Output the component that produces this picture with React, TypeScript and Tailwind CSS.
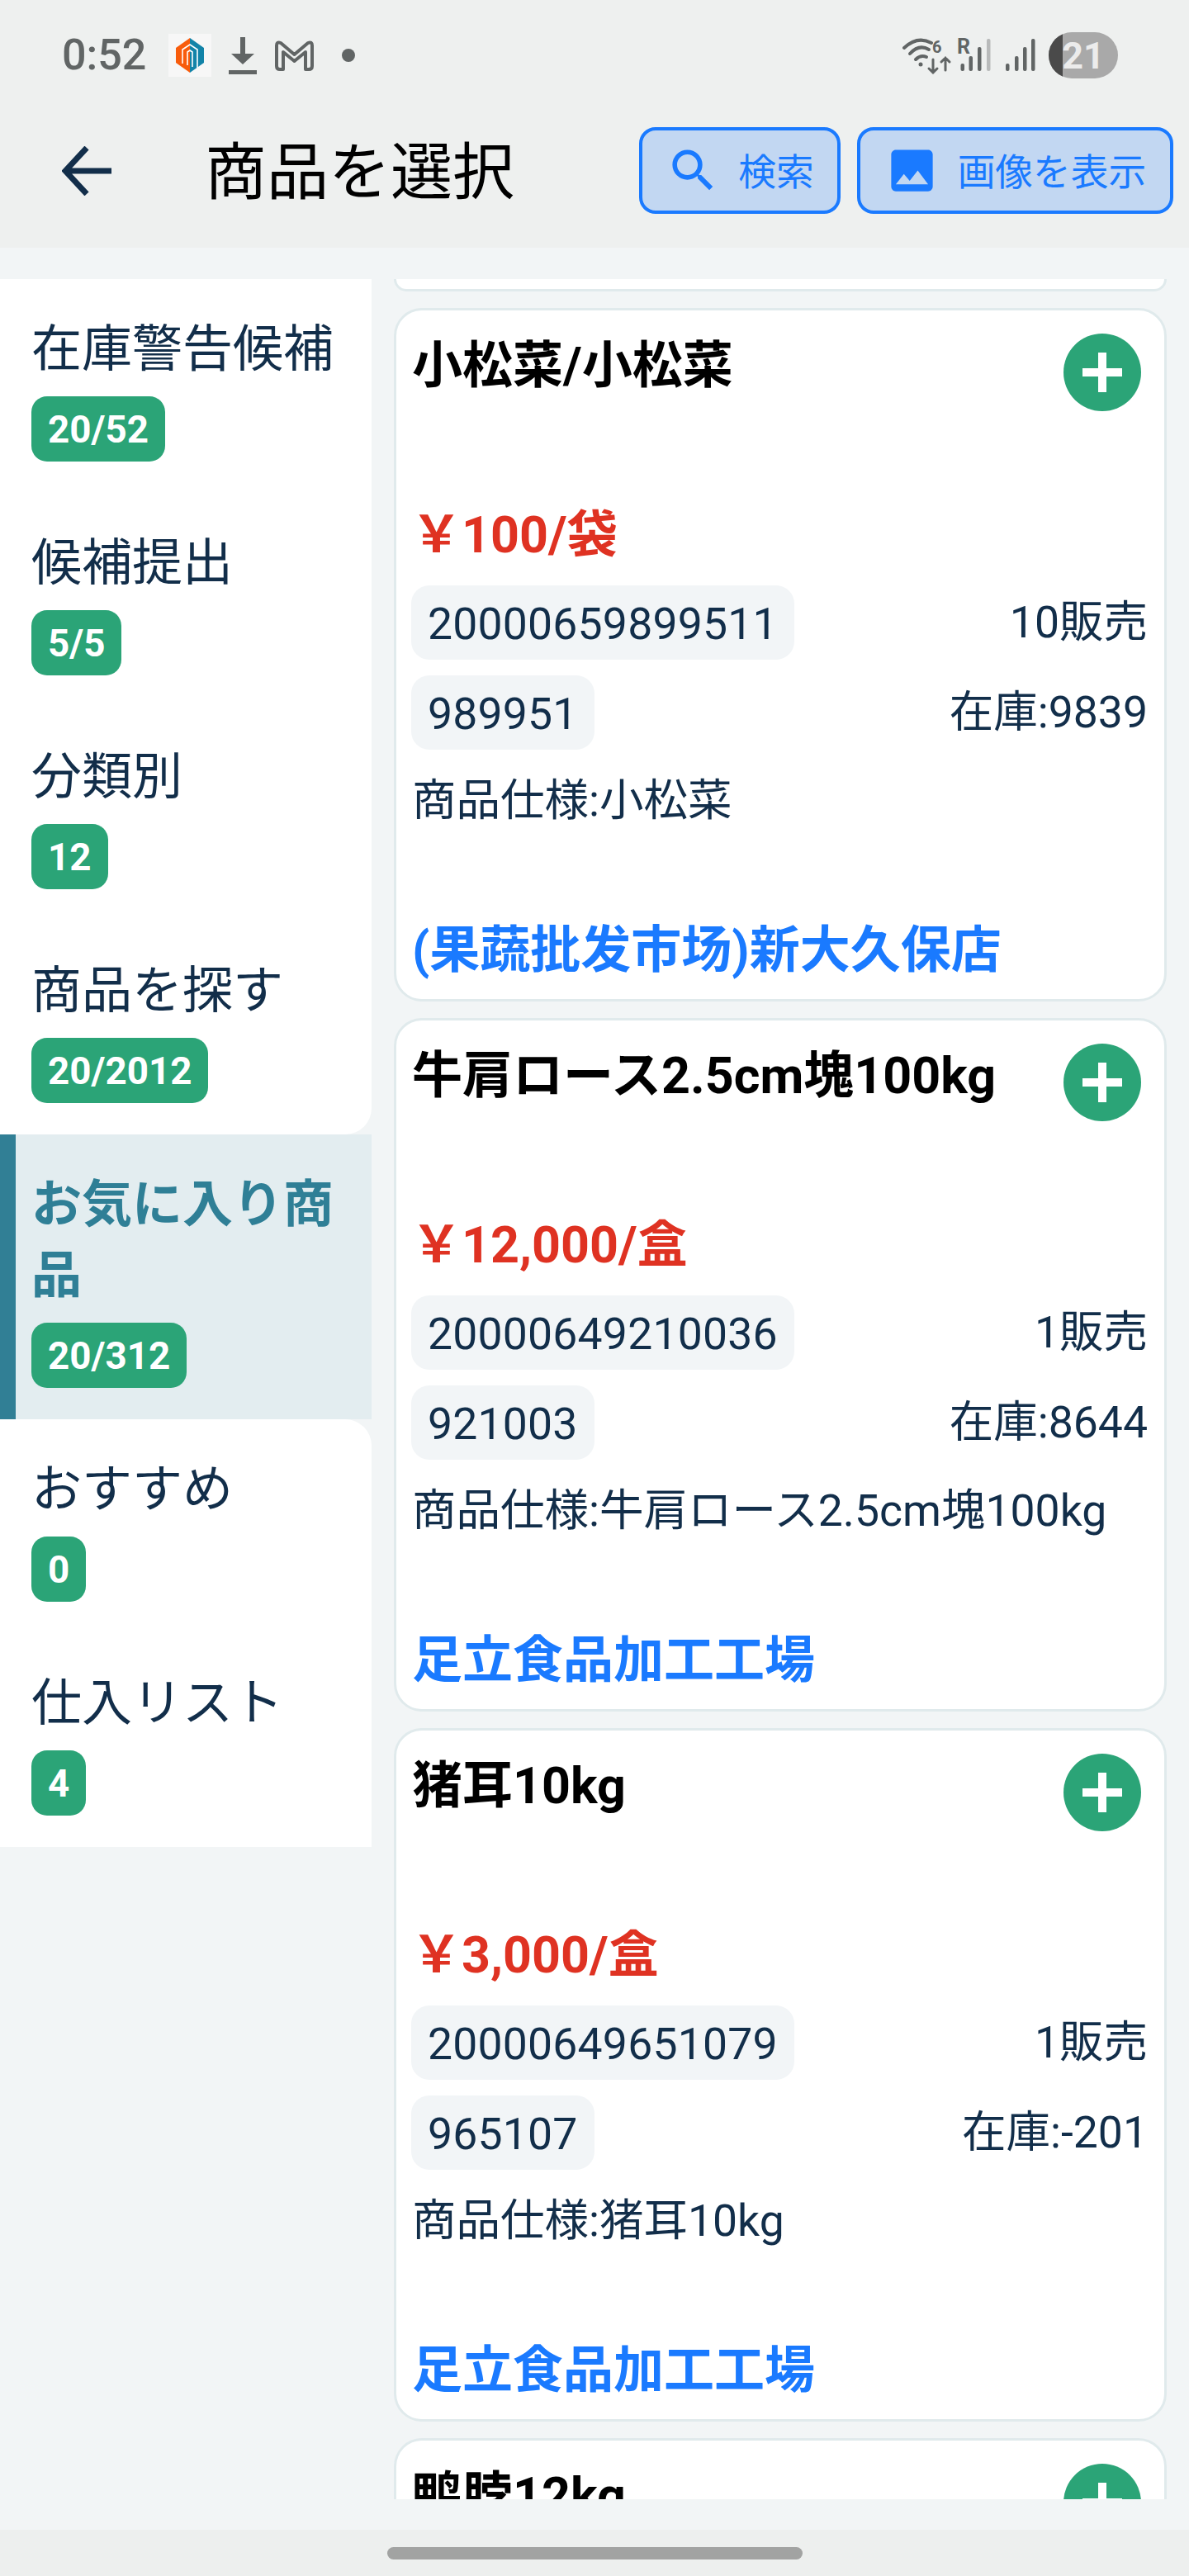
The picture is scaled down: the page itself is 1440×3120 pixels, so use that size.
const items = [
  { name: "在庫警告候補", count: "20/52" },
  { name: "候補提出", count: "5/5" },
  { name: "分類別", count: "12" },
  { name: "商品を探す", count: "20/2012", shape: "rounded-br-[32px]" },
  { name: "お気に入り商品", count: "20/312", active: true },
  { name: "おすすめ", count: "0", shape: "rounded-tr-[32px]" },
  { name: "仕入リスト", count: "4" },
];

const products = [
  { title: "小松菜/小松菜", price: "￥100/袋", code: "20000659899511", sold: "10販売", sku: "989951", stock: "在庫:9839", spec: "商品仕様:小松菜", shop: "(果蔬批发市场)新大久保店" },
  { title: "牛肩ロース2.5cm塊100kg", price: "￥12,000/盒", code: "20000649210036", sold: "1販売", sku: "921003", stock: "在庫:8644", spec: "商品仕様:牛肩ロース2.5cm塊100kg", shop: "足立食品加工工場" },
  { title: "猪耳10kg", price: "￥3,000/盒", code: "20000649651079", sold: "1販売", sku: "965107", stock: "在庫:-201", spec: "商品仕様:猪耳10kg", shop: "足立食品加工工場" },
];

const StatusBar = () => (
  <div className="flex h-[134px] items-center pl-[75px] pr-[86px] text-[#616565]">
    <span className="w-[129px] text-[52px] font-medium leading-none">0:52</span>
    <svg width="52" height="52" viewBox="0 0 52 52" className="bg-[#f7f7f7]">
      <path d="M26 5 L9 17 V35 L26 47 Z" fill="#f85c0c" />
      <path d="M26 5 L43 17 V35 L26 47 Z" fill="#1283a8" />
      <path d="M17 36 V19 L26 13 L35 19 V41 M23 38 V22 L26 20 L29 22 V40" fill="none" stroke="#fff" strokeWidth="1.6" />
    </svg>
    <svg width="34" height="45" viewBox="0 0 34 45" className="ml-[21px]" fill="#616565">
      <rect x="14" y="0" width="6" height="22" />
      <path d="M3 20 H31 L17 33 Z" />
      <rect x="0" y="40" width="34" height="5" />
    </svg>
    <svg width="47" height="37" viewBox="0 0 47 37" className="ml-[22px]" fill="none" stroke="#616565" strokeWidth="4" strokeLinejoin="round">
      <path d="M2 6 Q2 1 7 3 L23.5 17 L40 3 Q45 1 45 6 V31 Q45 35 41 35 H37 V14 L23.5 25 L10 14 V35 H6 Q2 35 2 31 Z" />
    </svg>
    <span className="ml-[34px] h-[16px] w-[16px] rounded-full bg-[#616565]" />

    <svg width="107" height="50" viewBox="0 0 107 50" className="ml-auto" fill="none" stroke="#616565" strokeLinecap="round">
      <path d="M2 16 Q18 1 35 10" strokeWidth="4" />
      <path d="M9 23 Q20 11 32 18" strokeWidth="4" />
      <path d="M16 30 Q22 24 29 27" strokeWidth="4" />
      <circle cx="22" cy="36" r="2.5" fill="#616565" stroke="none" />
      <path d="M37 30 V46 M32 41 L37 46 L42 41 M52 43 V28 M47 33 L52 28 L57 33" strokeWidth="3" />
      <text x="36" y="22" fontSize="20" fontWeight="700" fill="#616565" stroke="none" fontFamily="Roboto, sans-serif">6</text>
      <text x="66" y="23" fontSize="25" fontWeight="700" fill="#616565" stroke="none" fontFamily="Roboto, sans-serif">R</text>
      <rect x="70.5" y="35" width="4.5" height="9" rx="2" fill="#616565" stroke="none" />
      <rect x="80.5" y="26" width="4.5" height="18" rx="2" fill="#616565" stroke="none" />
      <rect x="91" y="15" width="4.5" height="29" rx="2" fill="#616565" stroke="none" />
      <rect x="102" y="5" width="4.5" height="39" rx="2" fill="#b8baba" stroke="none" />
    </svg>
    <svg width="36" height="50" viewBox="0 0 36 50" className="ml-[18px]" fill="#616565">
      <rect x="0" y="35" width="4.5" height="9" rx="2" />
      <rect x="11" y="26" width="4.5" height="18" rx="2" />
      <rect x="21" y="15" width="4.5" height="29" rx="2" />
      <rect x="31" y="5" width="4.5" height="39" rx="2" />
    </svg>
    <div className="relative ml-[16px] flex h-[56px] w-[84px] items-center justify-center overflow-hidden rounded-full bg-[#a9a9a9]">
      <span className="absolute bottom-0 left-0 top-0 w-[17px] bg-[#4a4a4a]" />
      <span className="text-[45px] font-bold leading-none text-[#ececec]">21</span>
    </div>
  </div>
);

const Header = () => (
  <div className="flex h-[105px] items-center pl-[75px] pr-[19px]">
    <svg width="60" height="60" viewBox="0 0 60 60" fill="none" stroke="#122e4a" strokeWidth="7">
      <path d="M60 30 H4 M30 2 L4 30 L30 58" />
    </svg>
    <h1 className="ml-[113px] mt-[6px] text-[75px] font-normal leading-none text-black">商品を選択</h1>
    <button className="ml-auto flex h-[105px] w-[244px] items-center justify-center gap-[21px] rounded-[20px] border-[4px] border-[#1a7aff] bg-[#c2d7f2] text-[45.75px] text-[#1a7aff]">
      <svg width="67" height="67" viewBox="0 0 24 24" fill="#1a7aff">
        <path d="M15.5 14h-.79l-.28-.27A6.471 6.471 0 0 0 16 9.5 6.5 6.5 0 1 0 9.5 16c1.61 0 3.09-.59 4.23-1.57l.27.28v.79l5 4.99L20.49 19l-4.99-5zm-6 0C7.01 14 5 11.99 5 9.5S7.01 5 9.5 5 14 7.01 14 9.5 11.99 14 9.5 14z" />
      </svg>
      <span className="pt-[8px]">検索</span>
    </button>
    <button className="ml-[20px] flex h-[105px] w-[383px] items-center justify-center gap-[22px] rounded-[20px] border-[4px] border-[#1a7aff] bg-[#c2d7f2] text-[45.75px] text-[#1a7aff]">
      <svg width="67" height="67" viewBox="0 0 24 24" fill="#1a7aff">
        <path d="M21 19V5c0-1.1-.9-2-2-2H5c-1.1 0-2 .9-2 2v14c0 1.1.9 2 2 2h14c1.1 0 2-.9 2-2zM8.5 13.5l2.5 3.01L14.5 12l4.5 6H5l3.5-4.5z" />
      </svg>
      <span className="pt-[8px]">画像を表示</span>
    </button>
  </div>
);

const Sidebar = () => (
  <div className="w-[450px] shrink-0 self-start">
    {items.map((item) => (
      <div
        key={item.name}
        className={
          item.active
            ? "border-l-[19px] border-[#317f95] bg-[#e3edf0] pb-[38px] pl-[19px] pr-[10px] pt-[42px]"
            : `bg-white pb-[38px] pl-[38px] pr-[10px] pt-[42px] ${item.shape ?? ""}`
        }
      >
        <div className={item.active ? "text-[61px] font-bold leading-[86px] text-[#2f7f96]" : "text-[61px] leading-[86px] text-[#122e4a]"}>
          {item.name}
        </div>
        <span className="mt-[14px] inline-block h-[79px] rounded-[19px] bg-[#2ba477] px-[20px] align-top text-[45.75px] font-bold leading-[81px] text-white">
          {item.count}
        </span>
      </div>
    ))}
  </div>
);

const CardTitle = ({ title }: { title: string }) => (
  <div className="flex h-[205px] items-start justify-between">
    <div className="pl-[1px] text-[61px] font-bold leading-[84px] text-black">{title}</div>
    <div className="mr-[8px] mt-[3px] flex h-[94px] w-[94px] items-center justify-center rounded-full bg-[#2ba477]">
      <svg width="48" height="48" viewBox="0 0 48 48" fill="#fff">
        <rect x="19" y="0" width="10" height="48" />
        <rect x="0" y="19" width="48" height="10" />
      </svg>
    </div>
  </div>
);

const ProductCard = ({ p }: { p: (typeof products)[number] }) => (
  <div className="shrink-0 rounded-[34px] border-[3px] border-[#e0eaec] bg-white pb-[17px] pl-[18px] pr-[20px] pt-[25px]">
    <CardTitle title={p.title} />
    <div className="text-[61px] font-bold leading-[84px] text-[#df3222]">{p.price}</div>
    <div className="mt-[19px] flex items-center justify-between text-[53.5px] text-[#122e4a]">
      <span className="h-[90px] rounded-[22px] bg-[#f2f5f7] px-[20px] leading-[94px] tracking-[0.2px]">{p.code}</span>
      <span>{p.sold}</span>
    </div>
    <div className="mt-[19px] flex items-center justify-between text-[53.5px] text-[#122e4a]">
      <span className="h-[90px] rounded-[22px] bg-[#f2f5f7] px-[20px] leading-[94px] tracking-[0.2px]">{p.sku}</span>
      <span>{p.stock}</span>
    </div>
    <div className="mt-[24px] pl-[1px] text-[53.5px] leading-[76px] text-[#122e4a]">{p.spec}</div>
    <div className="mt-[101px] pl-[1px] text-[61px] font-bold leading-[84px] text-[#1a7aff]">{p.shop}</div>
  </div>
);

export default function App() {
  return (
    <div className="flex h-[3120px] w-[1440px] flex-col overflow-hidden bg-[#f2f5f6] font-['Roboto','Noto_Sans_CJK_JP',sans-serif]">
      <div className="h-[300px] shrink-0 bg-[#eef0ef]">
        <StatusBar />
        <div className="mt-[20px]">
          <Header />
        </div>
      </div>
      <div className="flex h-[2727px] shrink-0 pb-0 pt-[38px]">
        <Sidebar />
        <div className="ml-[27px] flex h-[2689px] w-[936px] flex-col gap-[20px] overflow-hidden">
          <div className="h-[15px] shrink-0 rounded-b-[30px] border-x-[3px] border-b-[3px] border-[#e0eaec] bg-white" />
          {products.map((p) => (
            <ProductCard key={p.code} p={p} />
          ))}
          <div className="shrink-0 rounded-t-[34px] border-x-[3px] border-t-[3px] border-[#e0eaec] bg-white pl-[18px] pr-[20px] pt-[25px]">
            <CardTitle title="鸭脖12kg" />
          </div>
        </div>
      </div>
      <div className="h-[37px] shrink-0" />
      <div className="flex h-[56px] shrink-0 justify-center bg-[#edefee] pt-[21px]">
        <div className="h-[15px] w-[503px] rounded-full bg-[#a2a3a2]" />
      </div>
    </div>
  );
}
